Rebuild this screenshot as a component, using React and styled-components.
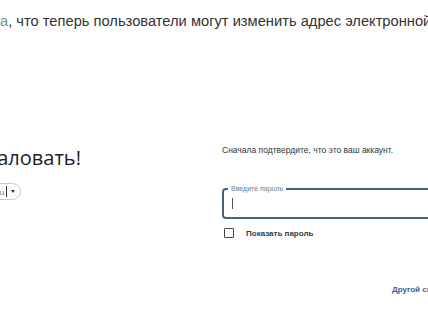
import React from "react";
import styled, { createGlobalStyle } from "styled-components";

const Global = createGlobalStyle`
  html, body {
    margin: 0;
    padding: 0;
    background: #ffffff;
    overflow: hidden;
  }
  body {
    width: 428px;
    height: 321px;
  }
`;

const Page = styled.div`
  width: 428px;
  height: 321px;
  overflow: hidden;
  display: flex;
  flex-direction: column;
  background: #fff;
`;

const ArticleLine = styled.p`
  margin: 0;
  padding-top: 12px;
  font-family: "Liberation Sans", Arial, sans-serif;
  font-size: 14.7px;
  line-height: 18px;
  color: #333333;
  white-space: nowrap;
`;

const Link = styled.span`
  color: #5a98ad;
`;

const Main = styled.div`
  display: flex;
  align-items: flex-start;
  margin-top: 114px;
`;

const Welcome = styled.div`
  flex: 0 0 250px;
  margin-left: -139px;
  display: flex;
  flex-direction: column;
  align-items: center;
`;

const Heading = styled.h1`
  margin: 0;
  font-family: "Open Sans", "Noto Sans", sans-serif;
  font-size: 20px;
  font-weight: 400;
  line-height: 27px;
  color: #202124;
  white-space: nowrap;
`;

const Chip = styled.div`
  margin-top: 12px;
  display: flex;
  align-items: center;
  gap: 4px;
  height: 15px;
  padding: 0 5px 0 3px;
  border: 1px solid #c7c9cc;
  border-radius: 9px;
  font-family: "Open Sans", sans-serif;
  font-size: 8px;
  color: #555;
  white-space: nowrap;
`;

const Avatar = styled.span`
  width: 10px;
  height: 10px;
  border-radius: 50%;
  background: #b8bcc2;
`;

const Email = styled.span`
  color: #6f7378;
  border-right: 1.5px solid #333;
  padding-right: 2px;
`;

const Caret = styled.span`
  width: 0;
  height: 0;
  border-left: 2.5px solid transparent;
  border-right: 2.5px solid transparent;
  border-top: 3px solid #333;
`;

const Form = styled.div`
  flex: 0 0 270px;
  margin-left: 111px;
  display: flex;
  flex-direction: column;
  font-family: "Liberation Sans", Arial, sans-serif;
`;

const Subtitle = styled.p`
  margin: 0;
  font-size: 8.5px;
  line-height: 12px;
  color: #333;
  white-space: nowrap;
`;

const Field = styled.div`
  position: relative;
  margin-top: 32px;
  height: 27px;
  border: 2px solid #46627f;
  border-radius: 4px;
  display: flex;
  align-items: center;
  padding-left: 8px;
`;

const FloatLabel = styled.span`
  position: absolute;
  top: -6px;
  left: 4px;
  padding: 0 3px;
  background: #fff;
  font-size: 7px;
  line-height: 9px;
  color: #5f7f9e;
  white-space: nowrap;
`;

const Cursor = styled.span`
  width: 1px;
  height: 11px;
  background: #555;
`;

const CheckRow = styled.label`
  margin-top: 9px;
  display: flex;
  align-items: center;
  gap: 12px;
  padding-left: 2px;
`;

const Box = styled.span`
  width: 8px;
  height: 8px;
  border: 1.5px solid #444;
  border-radius: 1px;
`;

const CheckText = styled.span`
  font-size: 8px;
  font-weight: 700;
  color: #3a3a3a;
  white-space: nowrap;
`;

const Other = styled.div`
  margin-top: 47px;
  padding-left: 170px;
  font-size: 8px;
  font-weight: 700;
  color: #3e6294;
  white-space: nowrap;
`;

export default function App() {
  return (
    <Page>
      <Global />
      <ArticleLine>
        <Link>а</Link>, что теперь пользователи могут изменить адрес электронной почты
      </ArticleLine>
      <Main>
        <Welcome>
          <Heading>Добро пожаловать!</Heading>
          <Chip>
            <Avatar />
            <Email>ab@bk.ru</Email>
            <Caret />
          </Chip>
        </Welcome>
        <Form>
          <Subtitle>Сначала подтвердите, что это ваш аккаунт.</Subtitle>
          <Field>
            <FloatLabel>Введите пароль</FloatLabel>
            <Cursor />
          </Field>
          <CheckRow>
            <Box />
            <CheckText>Показать пароль</CheckText>
          </CheckRow>
          <Other>Другой способ</Other>
        </Form>
      </Main>
    </Page>
  );
}
